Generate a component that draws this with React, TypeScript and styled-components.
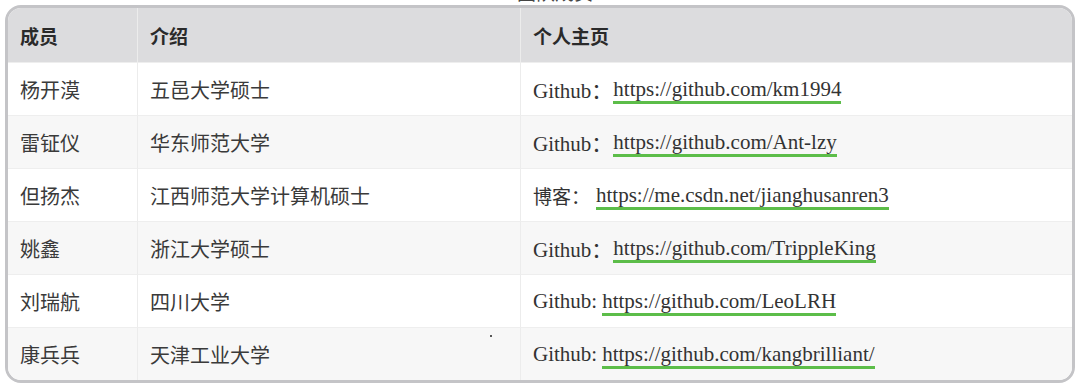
import React from "react";
import styled, { createGlobalStyle } from "styled-components";

const Global = createGlobalStyle`
  html, body { margin: 0; padding: 0; background: #ffffff; }
  body { font-family: "Noto Sans CJK SC", "Noto Sans", sans-serif; color: #333; }
`;

const Page = styled.div`
  width: 1080px;
  height: 386px;
  overflow: hidden;
  background: #fff;
  padding: 0 5px;
  box-sizing: border-box;
`;

const Caption = styled.div`
  height: 5px;
  overflow: hidden;
  display: flex;
  justify-content: center;
`;

const CaptionText = styled.span`
  font-family: "Noto Sans CJK SC", sans-serif;
  font-size: 19px;
  line-height: 22px;
  margin-top: -19px;
  color: #444;
  padding-left: 30px;
`;

const Table = styled.div`
  width: 1070px;
  border: 3px solid #c4c4c7;
  border-radius: 16px;
  overflow: hidden;
  box-sizing: border-box;
  display: grid;
  grid-template-columns: 129px 383px 1fr;
`;

const Cell = styled.div<{ $head?: boolean; $alt?: boolean; $first?: boolean }>`
  position: relative;
  height: ${(p) => (p.$head ? "54px" : "53px")};
  display: flex;
  align-items: center;
  box-sizing: border-box;
  padding-left: 12px;
  background: ${(p) => (p.$head ? "#dcdcde" : p.$alt ? "#f7f7f7" : "#ffffff")};
  border-left: ${(p) => (p.$first ? "none" : "1px solid #ececec")};
  border-top: ${(p) => (p.$head ? "none" : "1px solid #eeeeee")};
  font-family: "Noto Sans CJK SC", sans-serif;
  font-size: ${(p) => (p.$head ? "19px" : "20px")};
  font-weight: ${(p) => (p.$head ? 700 : 400)};
  color: ${(p) => (p.$head ? "#2a2a2a" : "#3a3a3a")};
  white-space: nowrap;
`;

const Label = styled.span<{ $cjk?: boolean }>`
  font-family: ${(p) =>
    p.$cjk ? `"Noto Sans CJK SC", sans-serif` : `"Liberation Serif", "Noto Sans CJK SC", serif`};
  font-size: ${(p) => (p.$cjk ? "19px" : "21px")};
  color: #333;
`;

const Link = styled.a<{ $gap: number }>`
  font-family: "Liberation Serif", serif;
  font-size: 21px;
  color: #333;
  text-decoration: none;
  border-bottom: 3px solid #5cbd49;
  padding-bottom: 1px;
  margin-left: ${(p) => p.$gap}px;
  line-height: 22px;
  margin-top: 4px;
`;

const Dot = styled.span`
  position: absolute;
  right: 28px;
  top: 7px;
  width: 2px;
  height: 2px;
  border-radius: 50%;
  background: #222;
`;

type Row = { name: string; intro: string; label: string; cjk?: boolean; url: string; gap: number };

const rows: Row[] = [
  { name: "杨开漠", intro: "五邑大学硕士", label: "Github：", url: "https://github.com/km1994", gap: 1 },
  { name: "雷钲仪", intro: "华东师范大学", label: "Github：", url: "https://github.com/Ant-lzy", gap: 1 },
  { name: "但扬杰", intro: "江西师范大学计算机硕士", label: "博客：", cjk: true, url: "https://me.csdn.net/jianghusanren3", gap: 6 },
  { name: "姚鑫", intro: "浙江大学硕士", label: "Github：", url: "https://github.com/TrippleKing", gap: 1 },
  { name: "刘瑞航", intro: "四川大学", label: "Github: ", url: "https://github.com/LeoLRH", gap: 5 },
  { name: "康兵兵", intro: "天津工业大学", label: "Github: ", url: "https://github.com/kangbrilliant/", gap: 5 },
];

export default function App() {
  return (
    <Page>
      <Global />
      <Caption>
        <CaptionText>团队成员</CaptionText>
      </Caption>
      <Table>
        <Cell $head $first>成员</Cell>
        <Cell $head>介绍</Cell>
        <Cell $head>个人主页</Cell>
        {rows.map((r, i) => {
          const alt = i % 2 === 1;
          return (
            <React.Fragment key={r.name}>
              <Cell $first $alt={alt}>{r.name}</Cell>
              <Cell $alt={alt}>
                {r.intro}
                {i === 5 && <Dot />}
              </Cell>
              <Cell $alt={alt}>
                <Label $cjk={r.cjk}>{r.label}</Label>
                <Link $gap={r.gap} href={r.url}>{r.url}</Link>
              </Cell>
            </React.Fragment>
          );
        })}
      </Table>
    </Page>
  );
}
